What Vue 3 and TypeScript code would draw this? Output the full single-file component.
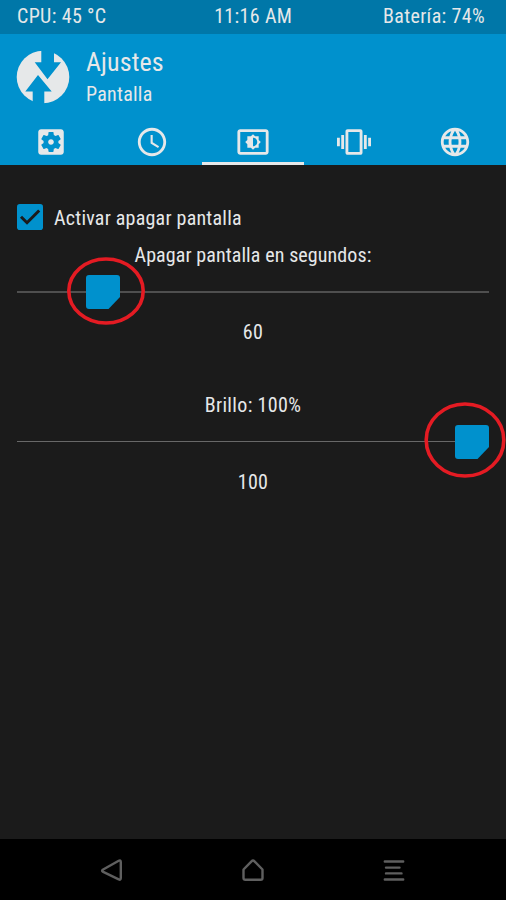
<script setup lang="ts">
interface Tab { name: string; path: string; active?: boolean }

const tabs: Tab[] = [
  { name: 'General', path: 'M12 10c-1.1 0-2 .9-2 2s.9 2 2 2 2-.9 2-2-.9-2-2-2zm7-7H5c-1.11 0-2 .9-2 2v14c0 1.1.89 2 2 2h14c1.11 0 2-.9 2-2V5c0-1.1-.89-2-2-2zm-1.75 9c0 .23-.02.46-.05.68l1.48 1.16c.13.11.17.3.08.45l-1.4 2.42c-.09.15-.27.21-.43.15l-1.74-.7c-.36.28-.76.51-1.18.69l-.26 1.85c-.03.17-.18.3-.35.3h-2.8c-.17 0-.32-.13-.35-.29l-.26-1.85c-.43-.18-.82-.41-1.18-.69l-1.74.7c-.16.06-.34 0-.43-.15l-1.4-2.42c-.09-.15-.05-.34.08-.45l1.48-1.16c-.03-.23-.05-.46-.05-.69 0-.23.02-.46.05-.68l-1.48-1.16c-.13-.11-.17-.3-.08-.45l1.4-2.42c.09-.15.27-.21.43-.15l1.74.7c.36-.28.76-.51 1.18-.69l.26-1.85c.03-.17.18-.3.35-.3h2.8c.17 0 .32.13.35.29l.26 1.85c.43.18.82.41 1.18.69l1.74-.7c.16-.06.34 0 .43.15l1.4 2.42c.09.15.05.34-.08.45l-1.48 1.16c.03.23.05.46.05.69z' },
  { name: 'Time', path: 'M11.99 2C6.47 2 2 6.48 2 12s4.47 10 9.99 10C17.52 22 22 17.52 22 12S17.52 2 11.99 2zM12 20c-4.42 0-8-3.58-8-8s3.58-8 8-8 8 3.58 8 8-3.58 8-8 8zm.5-13H11v6l5.25 3.15.75-1.23-4.5-2.67z' },
  { name: 'Screen', active: true, path: 'M21 3H3c-1.1 0-2 .9-2 2v14c0 1.1.9 2 2 2h18c1.1 0 2-.9 2-2V5c0-1.1-.9-2-2-2zm0 16.01H3V4.99h18v14.02zM8 16h2.5l1.5 1.5 1.5-1.5H16v-2.5l1.5-1.5-1.5-1.5V8h-2.5L12 6.5 10.5 8H8v2.5L6.5 12 8 13.5V16zm4-7c1.66 0 3 1.34 3 3s-1.34 3-3 3V9z' },
  { name: 'Vibration', path: 'M0 15h2V9H0v6zm3 2h2V7H3v10zm19-8v6h2V9h-2zm-3 8h2V7h-2v10zM16.5 3h-9C6.67 3 6 3.67 6 4.5v15c0 .83.67 1.5 1.5 1.5h9c.83 0 1.5-.67 1.5-1.5v-15c0-.83-.67-1.5-1.5-1.5zM16 19H8V5h8v14z' },
  { name: 'Language', path: 'M11.99 2C6.47 2 2 6.48 2 12s4.47 10 9.99 10C17.52 22 22 17.52 22 12S17.52 2 11.99 2zm6.93 6h-2.95c-.32-1.25-.78-2.45-1.38-3.56 1.84.63 3.37 1.91 4.33 3.56zM12 4.04c.83 1.2 1.48 2.53 1.91 3.96h-3.82c.43-1.43 1.08-2.76 1.91-3.96zM4.26 14C4.1 13.36 4 12.69 4 12s.1-1.36.26-2h3.38c-.08.66-.14 1.32-.14 2 0 .68.06 1.34.14 2H4.26zm.82 2h2.95c.32 1.25.78 2.45 1.38 3.56-1.84-.63-3.37-1.9-4.33-3.56zm2.95-8H5.08c.96-1.66 2.49-2.93 4.33-3.56C8.81 5.55 8.35 6.75 8.03 8zM12 19.96c-.83-1.2-1.48-2.53-1.91-3.96h3.82c-.43 1.43-1.08 2.76-1.91 3.96zM14.34 14H9.66c-.09-.66-.16-1.32-.16-2 0-.68.07-1.35.16-2h4.68c.09.65.16 1.32.16 2 0 .68-.07 1.34-.16 2zm.25 5.56c.6-1.11 1.06-2.31 1.38-3.56h2.95c-.96 1.65-2.49 2.93-4.33 3.56zM16.36 14c.08-.66.14-1.32.14-2 0-.68-.06-1.34-.14-2h3.38c.16.64.26 1.31.26 2s-.1 1.36-.26 2h-3.38z' },
]
</script>

<template>
  <div class="screen">
    <div class="status">
      <span>CPU: 45 °C</span>
      <span class="clock">11:16 AM</span>
      <span class="battery">Batería: 74%</span>
    </div>
    <header class="header">
      <div class="heading">
        <svg class="logo" viewBox="0 0 54 54">
          <circle cx="27" cy="27" r="26.3" />
          <path class="cut" d="M25.3 0V12.3H18.7L31.5 29.3L45 12.3H38V0ZM22 25L35.7 41.5H28.3V54H16.7V41.5H9.3Z" />
        </svg>
        <div>
          <h1 class="title">Ajustes</h1>
          <p class="subtitle">Pantalla</p>
        </div>
      </div>
      <nav class="tabs">
        <div v-for="tab in tabs" :key="tab.name" class="tab" :class="{ active: tab.active }">
          <svg viewBox="0 0 24 24"><path :d="tab.path" /></svg>
        </div>
      </nav>
    </header>
    <main class="content">
      <label class="check-row">
        <svg class="check" viewBox="0 0 26 26">
          <rect width="26" height="26" rx="2.8" />
          <path d="M4 12.8L10 18.7L22.2 6.5" />
        </svg>
        <span>Activar apagar pantalla</span>
      </label>
      <section class="setting">
        <p class="label timeout-label">Apagar pantalla en segundos:</p>
        <div class="slider timeout">
          <svg class="thumb" viewBox="0 0 34 34"><path d="M3 0H31Q34 0 34 3V22L22.5 34H3Q0 34 0 31V3Q0 0 3 0Z" /></svg>
          <svg class="ring" viewBox="0 0 78 68"><ellipse cx="39" cy="34" rx="37.2" ry="32" /></svg>
        </div>
        <p class="label">60</p>
      </section>
      <section class="setting brightness-setting">
        <p class="label">Brillo: 100%</p>
        <div class="slider brightness">
          <svg class="thumb" viewBox="0 0 34 34"><path d="M3 0H31Q34 0 34 3V22L22.5 34H3Q0 34 0 31V3Q0 0 3 0Z" /></svg>
          <svg class="ring" viewBox="0 0 82 76"><ellipse cx="41" cy="38" rx="38.8" ry="36" /></svg>
        </div>
        <p class="label">100</p>
      </section>
    </main>
    <footer class="nav">
      <svg viewBox="0 0 24 26"><path d="M2.7 11.8L18.7 2.8Q20.8 1.7 20.8 4V20Q20.8 22.5 18.7 21.3L2.7 13.7Q1.5 12.7 2.7 11.8Z" /></svg>
      <svg viewBox="0 0 24 26"><path d="M2.5 11.5L10.5 3.3Q12 1.8 13.5 3.3L21.5 11.5V20Q21.5 21.8 19.7 21.8H4.3Q2.5 21.8 2.5 20Z" /></svg>
      <svg viewBox="0 0 24 26"><path d="M2.8 3.5H21.2M4 9.6H17.5M4 15.4H19.5M2.8 21.5H21.2" /></svg>
    </footer>
  </div>
</template>

<style>
body { margin: 0; background: #1b1b1b; }
</style>

<style scoped>
.screen {
  width: 506px;
  height: 900px;
  display: flex;
  flex-direction: column;
  overflow: hidden;
  background: #1b1b1b;
  color: #e6e8e9;
  font-family: "Roboto Condensed", Roboto, sans-serif;
  font-stretch: 75%;
  font-size: 20px;
  line-height: 24px;
  letter-spacing: 0.35px;
}
svg { display: block; flex: none; }
h1, p { margin: 0; font-weight: 400; }
.status {
  height: 34px;
  box-sizing: border-box;
  padding: 0 21px 2px 17px;
  display: grid;
  grid-template-columns: 1fr auto 1fr;
  align-items: center;
  background: #0077a8;
}
.clock { padding-left: 4.5px; }
.battery { text-align: right; }
.header { height: 130.5px; background: #0091cd; }
.heading { display: flex; height: 86px; box-sizing: border-box; padding: 13px 16px 0; gap: 16px; }
.logo { width: 54px; height: 54px; margin-top: 3px; fill: #e6e8e9; }
.cut { fill: #0091cd; }
.title { font-size: 26px; line-height: 30px; letter-spacing: 0.1px; }
.subtitle { margin-top: 5px; letter-spacing: 0.25px; }
.tabs { height: 44.5px; display: grid; grid-template-columns: repeat(5, 1fr); }
.tab { display: flex; justify-content: center; padding-top: 5px; box-sizing: border-box; border-bottom: 3px solid transparent; }
.tab svg { width: 34px; height: 34px; fill: #e6e8e9; }
.tab.active { border-color: #e6e8e9; }
.content { flex: 1; padding: 39px 17px 0; }
.check-row { display: flex; align-items: center; gap: 11px; height: 26px; }
.check-row span { padding-top: 3px; letter-spacing: 0.23px; }
.check { width: 26px; height: 26px; fill: #0091cd; }
.check path { fill: none; stroke: #1b1b1b; stroke-width: 3; }
.label { text-align: center; }
.timeout-label { margin-top: 13px; letter-spacing: 0.1px; }
.slider { position: relative; height: 34px; margin: 8px 0 11px; display: flex; align-items: center; }
.slider::before { content: ""; width: 100%; height: 2px; background: #4f4f4f; }
.brightness::before { height: 1px; margin-bottom: 1px; background: #686868; }
.brightness-setting { margin-top: 49px; }
.thumb { position: absolute; top: 0; width: 34px; height: 34px; fill: #0091cd; }
.timeout .thumb { left: 68.5px; }
.brightness .thumb { right: 0; }
.ring { position: absolute; fill: none; stroke: #e41b23; stroke-width: 3.6; }
.timeout .ring { left: 50px; top: -18px; width: 78px; height: 68px; }
.brightness .ring { left: 407.3px; top: -22.8px; width: 82px; height: 76px; }
.nav {
  height: 61px;
  box-sizing: border-box;
  padding: 2.5px 42px 0;
  background: #000;
  display: grid;
  grid-template-columns: repeat(3, 1fr);
  align-items: center;
  justify-items: center;
}
.nav svg { width: 24px; height: 26px; fill: none; stroke: #5f5f5f; stroke-width: 2.4; stroke-linejoin: round; stroke-linecap: round; }
</style>
